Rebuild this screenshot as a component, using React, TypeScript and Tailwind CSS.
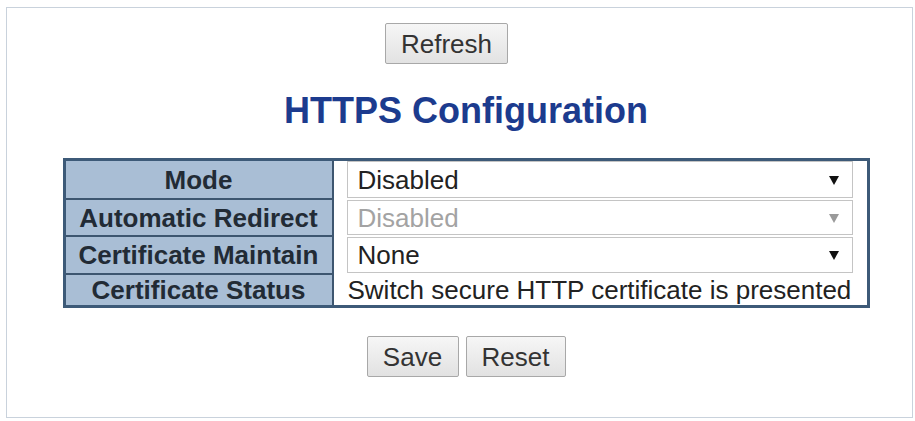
const ROWS = [
  { label: "Mode", value: "Disabled", kind: "select", h: "h-[39px]" },
  { label: "Automatic Redirect", value: "Disabled", kind: "disabled", h: "h-[37px]" },
  { label: "Certificate Maintain", value: "None", kind: "select", h: "h-[38px]" },
  {
    label: "Certificate Status",
    value: "Switch secure HTTP certificate is presented",
    kind: "text",
    h: "h-[30px]",
  },
];

const Arrow = ({ muted }: { muted?: boolean }) => (
  <svg width="10" height="10" viewBox="0 0 10 10" className="shrink-0">
    <path d="M0 1h10L5 10z" fill={muted ? "#9a9a9a" : "#111"} />
  </svg>
);

const Btn = ({ label, className = "" }: { label: string; className?: string }) => (
  <button
    className={`h-[41px] px-[15px] border border-[#a8a8a8] rounded-[2px] bg-gradient-to-b from-[#f6f6f6] to-[#e2e2e2] text-[#333] text-[26px] leading-none ${className}`}
  >
    {label}
  </button>
);

export default function App() {
  return (
    <div
      className="w-[915px] h-[421px] bg-white pt-[7px] pl-[6px] pr-[2px] pb-[3px]"
      style={{ fontFamily: '"Liberation Sans", Arial, sans-serif' }}
    >
      <div className="h-full border border-[#c9d2dc] flex flex-col items-center pl-[13px]">
        {/* Refresh */}
        <Btn label="Refresh" className="mt-[15px] mr-[39px] w-[123px]" />

        {/* Title */}
        <h1 className="mt-[29px] text-[36px] leading-[36px] font-bold text-[#1c3b8e]">
          HTTPS Configuration
        </h1>

        {/* Config table */}
        <div className="mt-[29px] border-[3px] border-[#3d5a78] flex">
          <div className="w-[266px] flex flex-col bg-[#a9bed5]">
            {ROWS.map((row, i) => (
              <div
                key={row.label}
                className={`${row.h} flex items-center justify-center font-bold text-[26px] leading-none text-[#222b35] ${
                  i < ROWS.length - 1 ? "border-b-2 border-[#3d5670]" : ""
                }`}
              >
                {row.label}
              </div>
            ))}
          </div>
          <div className="w-[2px] bg-[#3d5670]" />
          <div className="w-[533px] flex flex-col bg-white">
            {ROWS.map((row) =>
              row.kind === "text" ? (
                <div
                  key={row.label}
                  className={`${row.h} flex items-center pl-[14px] text-[26px] leading-none text-[#222]`}
                >
                  {row.value}
                </div>
              ) : (
                <div key={row.label} className={`${row.h} pl-[13px] pr-[14px] pb-[2px]`}>
                  <div
                    className={`h-full flex items-center justify-between border border-[#c4c4c4] pl-[10px] pr-[13px] text-[26px] leading-none ${
                      row.kind === "disabled" ? "text-[#a3a3a3]" : "text-[#222]"
                    }`}
                  >
                    <span>{row.value}</span>
                    <Arrow muted={row.kind === "disabled"} />
                  </div>
                </div>
              )
            )}
          </div>
        </div>

        {/* Actions */}
        <div className="mt-[28px] flex gap-[7px]">
          <Btn label="Save" className="w-[92px]" />
          <Btn label="Reset" className="w-[100px]" />
        </div>
      </div>
    </div>
  );
}
